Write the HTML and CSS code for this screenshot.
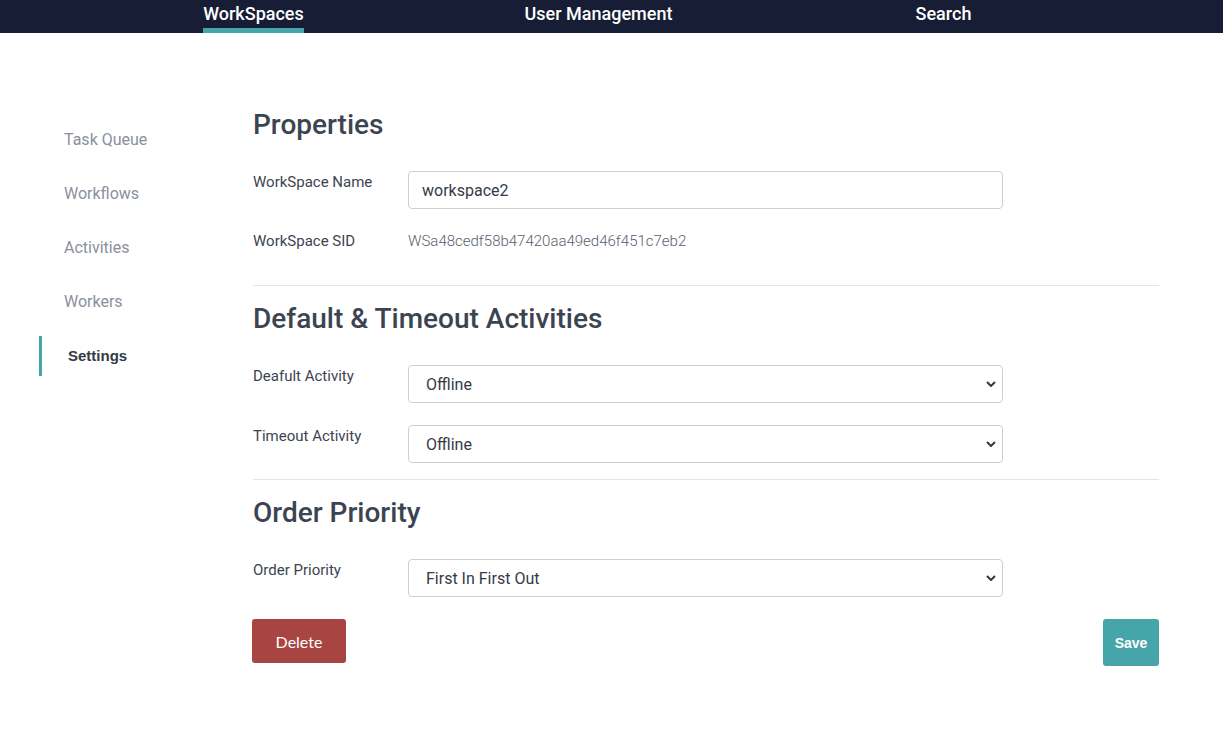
FILE: index.html
```html
<!DOCTYPE html>
<html>
<head>
<meta charset="utf-8">
<link rel="stylesheet" href="styles.css">
</head>
<body>
<nav class="topnav">
  <div class="nav-inner">
    <a class="nav-item active">WorkSpaces</a>
    <a class="nav-item">User Management</a>
    <a class="nav-item">Search</a>
  </div>
</nav>
<div class="page">
  <aside class="sidebar">
    <a class="side-item">Task Queue</a>
    <a class="side-item">Workflows</a>
    <a class="side-item">Activities</a>
    <a class="side-item">Workers</a>
    <a class="side-item active">Settings</a>
  </aside>
  <main class="content">
    <section class="section">
      <h2 class="heading">Properties</h2>
      <div class="row">
        <label class="label">WorkSpace Name</label>
        <input class="field" type="text" value="workspace2">
      </div>
      <div class="row row-sid">
        <span class="label">WorkSpace SID</span>
        <span class="sid">WSa48cedf58b47420aa49ed46f451c7eb2</span>
      </div>
    </section>
    <section class="section">
      <h2 class="heading">Default &amp; Timeout Activities</h2>
      <div class="row">
        <label class="label">Deafult Activity</label>
        <div class="select"><span>Offline</span><svg class="chev" viewBox="0 0 10 6" width="10" height="6"><path d="M1 1l4 4 4-4" fill="none" stroke="#343a40" stroke-width="2"/></svg></div>
      </div>
      <div class="row">
        <label class="label">Timeout Activity</label>
        <div class="select"><span>Offline</span><svg class="chev" viewBox="0 0 10 6" width="10" height="6"><path d="M1 1l4 4 4-4" fill="none" stroke="#343a40" stroke-width="2"/></svg></div>
      </div>
    </section>
    <section class="section last">
      <h2 class="heading">Order Priority</h2>
      <div class="row">
        <label class="label">Order Priority</label>
        <div class="select"><span>First In First Out</span><svg class="chev" viewBox="0 0 10 6" width="10" height="6"><path d="M1 1l4 4 4-4" fill="none" stroke="#343a40" stroke-width="2"/></svg></div>
      </div>
    </section>
    <div class="actions">
      <button class="btn btn-delete">Delete</button>
      <button class="btn btn-save">Save</button>
    </div>
  </main>
</div>
</body>
</html>
```
FILE: styles.css
```css
* { box-sizing: border-box; }
body {
  margin: 0;
  font-family: Roboto, "Liberation Sans", sans-serif;
  background: #fff;
  color: #3d4451;
}
.topnav {
  background: #161d35;
  height: 33px;
}
.nav-inner {
  display: grid;
  grid-template-columns: 345px 345px 345px;
  padding-left: 81px;
  height: 33px;
}
.nav-item {
  justify-self: center;
  color: #fff;
  font-size: 18px;
  font-weight: 500;
  line-height: 28px;
  height: 33px;
  border-bottom: 5px solid transparent;
}
.nav-item.active {
  border-bottom-color: #45a5a8;
}
.page {
  display: flex;
  padding-top: 71px;
}
.sidebar {
  width: 253px;
  display: flex;
  flex-direction: column;
  padding-left: 39px;
  padding-top: 9px;
}
.side-item {
  display: block;
  height: 54px;
  line-height: 54px;
  padding-left: 22px;
  font-size: 16px;
  color: #8a909d;
  border-left: 3px solid transparent;
}
.side-item.active {
  color: #343a47;
  font-family: "Liberation Sans", Arial, sans-serif;
  font-weight: 700;
  font-size: 15px;
  padding-left: 26px;
  height: 40px;
  line-height: 40px;
  margin-top: 7px;
  border-left-color: #45a5a8;
}
.content {
  width: 906px;
}
.section {
  border-bottom: 1px solid #e5e5e5;
}
.section.last { border-bottom: none; }
.heading {
  margin: 0;
  font-size: 28px;
  font-weight: 500;
  color: #3d4451;
  line-height: 36px;
  padding-top: 3px;
  padding-bottom: 28px;
}
.section + .section .heading { padding-top: 15px; }
.row {
  display: flex;
  align-items: flex-start;
  margin-bottom: 22px;
}
.label {
  width: 155px;
  font-size: 15px;
  color: #3d4451;
  padding-top: 2px;
  line-height: 18px;
}
.field, .select {
  width: 595px;
  height: 38px;
  border: 1px solid #cfcfcf;
  border-radius: 4px;
  font-family: Roboto, sans-serif;
  font-size: 16px;
  color: #343a47;
  padding: 0 13px;
  background: #fff;
}
.select {
  display: flex;
  align-items: center;
  justify-content: space-between;
  padding: 0 5px 0 17px;
}
.chev { margin-right: 1px; }
.row-sid {
  margin-bottom: 35px;
  padding-top: 1px;
}
.row-sid .label { padding-top: 0; }
.sid {
  font-size: 15px;
  font-weight: 300;
  color: #5a6070;
  line-height: 18px;
}
.section:nth-of-type(2) .row:last-child { margin-bottom: 16px; }
.actions {
  display: flex;
  justify-content: space-between;
  align-items: flex-start;
}
.btn {
  border: none;
  border-radius: 3px;
  color: #fff;
  cursor: pointer;
}
.btn-delete {
  background: #a84442;
  width: 94px;
  height: 44px;
  font-family: Lato, sans-serif;
  font-size: 16px;
  margin-left: -1px;
}
.btn-save {
  background: #46a5a8;
  width: 56px;
  height: 47px;
  font-family: "Liberation Sans", Arial, sans-serif;
  font-weight: 700;
  font-size: 14px;
}
```
